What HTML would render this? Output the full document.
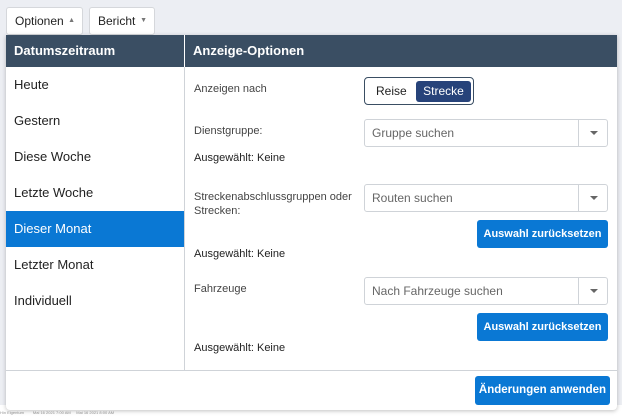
<!DOCTYPE html>
<html><head><style>
*{box-sizing:border-box;margin:0;padding:0}
body{width:622px;height:417px;background:#eceef3;font-family:"Liberation Sans",sans-serif;position:relative;overflow:hidden;font-size:13px;color:#333}
.a{position:absolute}
.tb{position:absolute;top:7px;height:28px;background:#fff;border:1px solid #d5d7db;border-radius:3px;font-size:12px;line-height:26px;padding-left:8px;color:#222;white-space:nowrap}
.tb span{position:absolute;right:7px;top:0;font-size:7px;color:#777}
.panel{left:6px;top:35px;width:611px;height:375px;background:#fff;border-radius:0 0 4px 4px;box-shadow:0 1px 4px rgba(0,0,0,.25)}
.hd{position:absolute;top:0;height:32px;background:#3a4e63;color:#fff;font-weight:bold;font-size:13px;line-height:32px;padding-left:8px}
.li{position:absolute;left:0;width:178px;height:36px;line-height:36px;padding-left:8px;font-size:13px;color:#222}
.lb{position:absolute;left:188px;font-size:11px;color:#444}
.sel{position:absolute;left:358px;width:244px;height:28px;border:1px solid #cfd3d8;border-radius:3px;font-size:12px;color:#666;line-height:26px;padding-left:7px}
.sel:after{content:"";position:absolute;right:0;top:0;width:28px;height:26px;border-left:1px solid #cfd3d8}
.sel i{position:absolute;right:9px;top:11px;border-left:4px solid transparent;border-right:4px solid transparent;border-top:4px solid #666}
.btn{position:absolute;background:#0a78d4;color:#fff;font-weight:bold;font-size:11px;border-radius:3px;text-align:center;white-space:nowrap}
</style></head><body>
<div class="a" style="left:0;top:405px;width:622px;height:12px;background:#fff;font-size:4px;color:#999;padding-top:5px">Hin Eigentum &nbsp;&nbsp;&nbsp;&nbsp;&nbsp;&nbsp; Mai 16 2021 7:00 AM &nbsp;&nbsp;&nbsp; Mai 16 2021 8:00 AM</div>
<div class="tb" style="left:6px;width:77px">Optionen<span>▲</span></div>
<div class="tb" style="left:89px;width:66px">Bericht<span>▼</span></div>
<div class="a panel">
<div class="hd" style="left:0;width:178px">Datumszeitraum</div>
<div class="hd" style="left:179px;width:432px">Anzeige-Optionen</div>
<div class="a" style="left:178px;top:32px;width:1px;height:304px;background:#cfd3d8"></div>
<div class="a" style="left:0;top:335px;width:611px;height:1px;background:#cfd3d8"></div>
<div class="li" style="top:32px">Heute</div>
<div class="li" style="top:68px">Gestern</div>
<div class="li" style="top:104px">Diese Woche</div>
<div class="li" style="top:140px">Letzte Woche</div>
<div class="li" style="top:176px;background:#0a78d4;color:#fff">Dieser Monat</div>
<div class="li" style="top:212px">Letzter Monat</div>
<div class="li" style="top:248px">Individuell</div>
<div class="lb" style="top:48px">Anzeigen nach</div>
<div class="a" style="left:358px;top:42px;width:110px;height:28px;border:1px solid #3a4e63;border-radius:4px">
<div class="a" style="left:11px;top:6px;font-size:12px;color:#222">Reise</div>
<div class="a" style="left:51px;top:3px;width:55px;height:21px;background:#27437a;border-radius:3px;color:#fff;font-size:12px;line-height:21px;text-align:center">Strecke</div></div>
<div class="lb" style="top:90px">Dienstgruppe:</div>
<div class="sel" style="top:84px">Gruppe suchen<i></i></div>
<div class="lb" style="top:117px;color:#222">Ausgewählt: Keine</div>
<div class="lb" style="top:155px;line-height:14px">Streckenabschlussgruppen oder<br>Strecken:</div>
<div class="sel" style="top:149px">Routen suchen<i></i></div>
<div class="btn" style="left:471px;top:185px;width:131px;height:28px;line-height:28px">Auswahl zurücksetzen</div>
<div class="lb" style="top:213px;color:#222">Ausgewählt: Keine</div>
<div class="lb" style="top:248px">Fahrzeuge</div>
<div class="sel" style="top:242px">Nach Fahrzeuge suchen<i></i></div>
<div class="btn" style="left:471px;top:278px;width:131px;height:28px;line-height:28px">Auswahl zurücksetzen</div>
<div class="lb" style="top:307px;color:#222">Ausgewählt: Keine</div>
<div class="btn" style="left:469px;top:341px;width:135px;height:29px;line-height:29px;font-size:11.5px">Änderungen anwenden</div>
</div>
</body></html>
